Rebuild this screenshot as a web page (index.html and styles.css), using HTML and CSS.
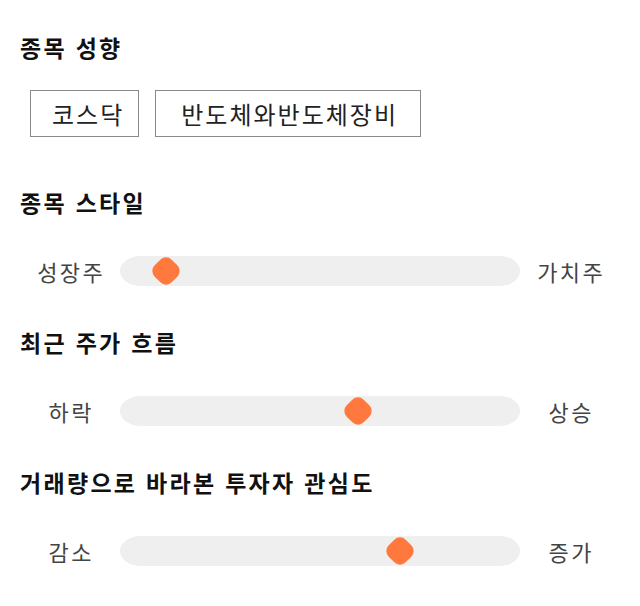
FILE: index.html
```html
<!DOCTYPE html>
<html lang="ko">
<head>
<meta charset="utf-8">
<title>종목 성향</title>
<link rel="stylesheet" href="styles.css">
</head>
<body>
<main class="page">
  <section class="section section-tags">
    <h2 class="section-head">종목 성향</h2>
    <div class="chips">
      <span class="chip chip-short">코스닥</span>
      <span class="chip chip-wide">반도체와반도체장비</span>
    </div>
  </section>

  <section class="section">
    <h2 class="section-head">종목 스타일</h2>
    <div class="slider-row">
      <span class="slider-label">성장주</span>
      <div class="track"><span class="thumb" style="left: 11.4%"></span></div>
      <span class="slider-label">가치주</span>
    </div>
  </section>

  <section class="section">
    <h2 class="section-head">최근 주가 흐름</h2>
    <div class="slider-row">
      <span class="slider-label">하락</span>
      <div class="track"><span class="thumb" style="left: 59.4%"></span></div>
      <span class="slider-label">상승</span>
    </div>
  </section>

  <section class="section">
    <h2 class="section-head">거래량으로 바라본 투자자 관심도</h2>
    <div class="slider-row">
      <span class="slider-label">감소</span>
      <div class="track"><span class="thumb" style="left: 70%"></span></div>
      <span class="slider-label">증가</span>
    </div>
  </section>
</main>
</body>
</html>
```
FILE: styles.css
```css
* { box-sizing: border-box; }

html, body {
  margin: 0;
  padding: 0;
  background: #ffffff;
}

body {
  font-family: "Noto Sans CJK KR", "Noto Sans", sans-serif;
  color: #111111;
}

.page {
  display: flex;
  flex-direction: column;
  padding: 32px 20px 0 20px;
}

.section + .section {
  margin-top: 41px;
}

.section-tags {
  margin-bottom: 9px;
}

.section-head {
  margin: 0;
  font-size: 23px;
  line-height: 30px;
  font-weight: 700;
  letter-spacing: 2.3px;
  color: #111111;
}

.chips {
  display: flex;
  gap: 16px;
  margin-top: 28px;
  padding-left: 10px;
}

.chip {
  display: flex;
  align-items: center;
  height: 47px;
  border: 1px solid #8a8a8a;
  font-size: 24px;
  line-height: 1;
  letter-spacing: 2px;
  color: #222222;
}

.chip-short {
  padding: 0 14px 0 21px;
}

.chip-wide {
  padding: 0 22px 0 25px;
}

.slider-row {
  display: grid;
  grid-template-columns: 100px 400px 100px;
  align-items: center;
  height: 30px;
  margin-top: 39px;
}

.slider-label {
  text-align: center;
  font-size: 22px;
  line-height: 30px;
  letter-spacing: 2.5px;
  text-indent: 2.5px;
  color: #444444;
}

.track {
  position: relative;
  height: 30px;
  background: #efefef;
  border-radius: 20px / 15px;
}

.thumb {
  position: absolute;
  top: 50%;
  width: 24px;
  height: 24px;
  background: #ff793e;
  border-radius: 8px;
  transform: translate(-50%, -50%) rotate(45deg);
}
```
